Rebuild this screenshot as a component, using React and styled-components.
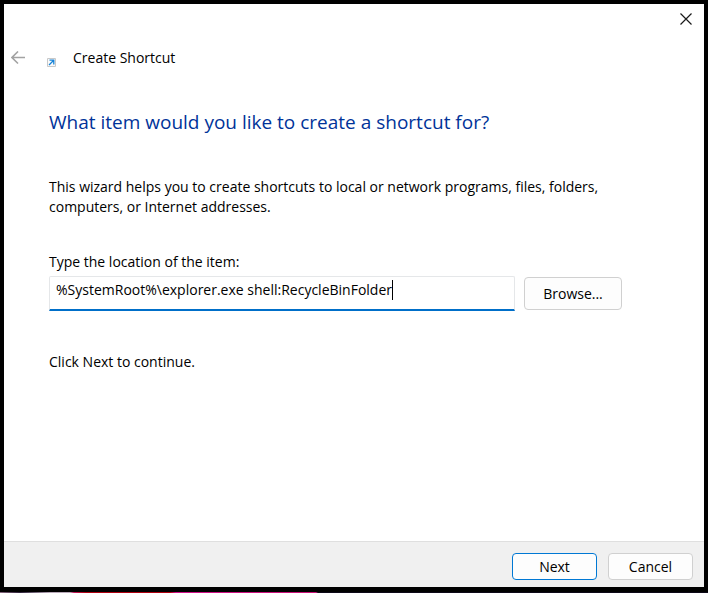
import React, { useState } from "react";
import styled, { createGlobalStyle } from "styled-components";

const GlobalStyle = createGlobalStyle`
  * {
    box-sizing: border-box;
  }

  body {
    margin: 0;
    background: #000000;
    color: #000000;
    font-family: "Open Sans", "Noto Sans", sans-serif;
    font-size: 14px;
    line-height: 20px;
  }
`;

const Desktop = styled.div`
  display: flex;
  flex-direction: column;
  min-height: 100vh;
  padding: 4px 4px 0;
`;

const Dialog = styled.div`
  display: flex;
  flex: 1;
  flex-direction: column;
  background: #ffffff;
`;

const Wallpaper = styled.div`
  height: 1px;
  margin: 5px -4px 0;
  background: linear-gradient(
    90deg,
    #8a6a80 0,
    #2c2038 20px,
    #b9a9b9 50px,
    #b9a9b9 70px,
    #c2185b 74px,
    #b00010 86px,
    #b00010 170px,
    #d0108a 176px,
    #c80f74 316px,
    #0d0818 318px
  );
`;

const TitleBar = styled.div`
  display: flex;
  justify-content: flex-end;
  height: 30px;
`;

const IconButton = styled.button`
  display: flex;
  align-items: center;
  justify-content: center;
  width: ${(props) => props.$width};
  height: 30px;
  padding: 0;
  border: 0;
  background: transparent;
  color: ${(props) => props.$color};
`;

const Header = styled.header`
  display: flex;
  align-items: center;
  height: 48px;
`;

const ShortcutIcon = styled.svg`
  margin: 8px 17px 0 15px;
`;

const Content = styled.main`
  flex: 1;
  padding: 26px 82px 32px 45px;
`;

const Heading = styled.h1`
  margin: 0 0 41px;
  color: #003399;
  font-size: 19px;
  font-weight: 400;
  line-height: 28px;
`;

const Text = styled.p`
  max-width: 576px;
  margin: 0;
`;

const Field = styled.div`
  display: grid;
  grid-template-columns: minmax(0, 1fr) 98px;
  column-gap: 9px;
  margin: 35px 0 41px;
`;

const Label = styled.label`
  grid-column: 1 / -1;
  margin-bottom: 4px;
`;

const TextBox = styled.div`
  display: flex;
  align-items: flex-start;
  height: 35px;
  padding: 3px 6px 0;
  border: 1px solid #e5e7e9;
  border-bottom: 2px solid #006fc9;
  border-radius: 2px 2px 0 0;
`;

const Input = styled.input`
  field-sizing: content;
  min-width: 0;
  max-width: 100%;
  height: 20px;
  padding: 0;
  border: 0;
  outline: 0;
  background: transparent;
  color: inherit;
  caret-color: transparent;
  font: inherit;
`;

const Caret = styled.span`
  width: 1px;
  height: 20px;
  background: #000000;
`;

const Button = styled.button`
  height: ${(props) => props.$height || "27px"};
  min-width: 85px;
  padding: 0;
  border: 1px solid ${(props) => (props.$primary ? "#0078d4" : "#d0d0d0")};
  border-radius: 4px;
  background: #fdfdfd;
  color: #000000;
  font: inherit;
`;

const BrowseButton = styled(Button)`
  margin-top: 1px;
`;

const Footer = styled.footer`
  display: flex;
  justify-content: flex-end;
  gap: 11px;
  height: 46px;
  padding: 11px 11px 0;
  border-top: 1px solid #dfdfdf;
  background: #f0f0f0;
`;

export default function App() {
  const [location, setLocation] = useState(
    "%SystemRoot%\\explorer.exe shell:RecycleBinFolder"
  );

  return (
    <>
      <GlobalStyle />
      <Desktop>
        <Dialog role="dialog" aria-label="Create Shortcut">
          <TitleBar>
            <IconButton $width="36px" $color="#1a1a1a" aria-label="Close">
              <svg width="12" height="12" viewBox="0 0 12 12">
                <path d="M0.5 0.5L11.5 11.5M11.5 0.5L0.5 11.5" stroke="currentColor" strokeWidth="1.2" />
              </svg>
            </IconButton>
          </TitleBar>
          <Header>
            <IconButton $width="28px" $color="#a3a3a3" aria-label="Back">
              <svg width="14" height="14" viewBox="0 0 14 14" fill="none">
                <path d="M14 6.5H1M7 0.5L1 6.5L7 12.5" stroke="currentColor" strokeWidth="1.6" />
              </svg>
            </IconButton>
            <ShortcutIcon width="9" height="9" viewBox="0 0 9 9" fill="none">
              <path d="M0.5 0.5H8.5V8.5H0.5Z" fill="#fafafa" stroke="#c8c8c8" />
              <path d="M2 7L6.5 2.5M2.5 2.2H6.8V6.5" stroke="#1683d8" strokeWidth="1.3" />
            </ShortcutIcon>
            <span>Create Shortcut</span>
          </Header>
          <Content>
            <Heading>What item would you like to create a shortcut for?</Heading>
            <Text>
              This wizard helps you to create shortcuts to local or network
              programs, files, folders, computers, or Internet addresses.
            </Text>
            <Field>
              <Label htmlFor="location">Type the location of the item:</Label>
              <TextBox>
                <Input
                  id="location"
                  type="text"
                  value={location}
                  onChange={(e) => setLocation(e.target.value)}
                />
                <Caret />
              </TextBox>
              <BrowseButton type="button" $height="33px">Browse...</BrowseButton>
            </Field>
            <Text>Click Next to continue.</Text>
          </Content>
          <Footer>
            <Button type="button" $primary>Next</Button>
            <Button type="button">Cancel</Button>
          </Footer>
        </Dialog>
        <Wallpaper />
      </Desktop>
    </>
  );
}
